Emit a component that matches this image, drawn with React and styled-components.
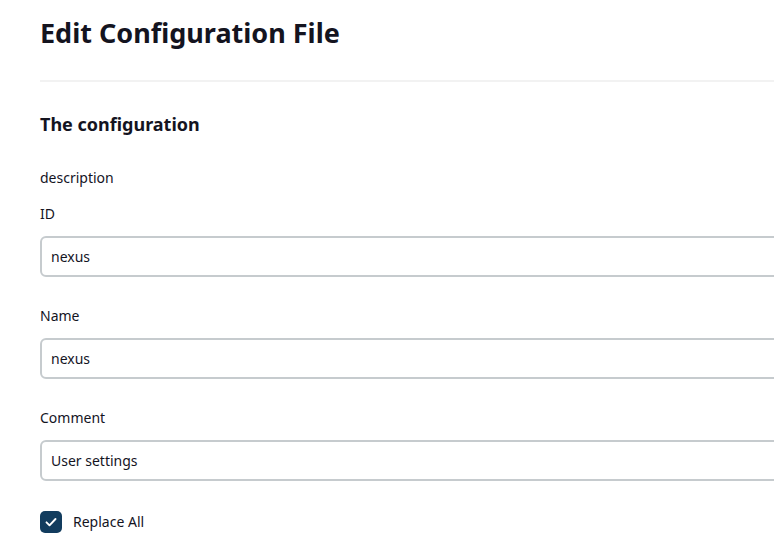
import styled, { createGlobalStyle } from "styled-components";

const GlobalStyle = createGlobalStyle`
  html, body {
    margin: 0;
    padding: 0;
    overflow: hidden;
    background: #ffffff;
  }
  body {
    font-family: "Noto Sans", "Open Sans", sans-serif;
    color: #14141f;
  }
`;

const Page = styled.div`
  width: 820px;
  padding: 14px 0 0 40px;
  box-sizing: border-box;
`;

const Title = styled.h1`
  margin: 0;
  font-size: 27px;
  font-weight: 700;
  line-height: 38px;
`;

const Separator = styled.hr`
  margin: 28px 0 0;
  border: none;
  height: 2px;
  background-color: #f2f2f2;
`;

const SectionTitle = styled.h2`
  margin: 29px 0 0;
  font-size: 18px;
  font-weight: 700;
  line-height: 26px;
`;

const Description = styled.div`
  margin-top: 31px;
  font-size: 14px;
  line-height: 20px;
`;

const FormItem = styled.div`
  margin-top: ${(props) => props.gap || 29}px;
`;

const Label = styled.label`
  display: block;
  font-size: 14px;
  line-height: 20px;
  margin-bottom: 12px;
`;

const Input = styled.input`
  display: block;
  width: 100%;
  height: 41px;
  box-sizing: border-box;
  padding: 0 9px;
  border: 2px solid #c6cbce;
  border-radius: 6px;
  font-family: inherit;
  font-size: 14px;
  color: #14141f;
  background: #fff;
  outline: none;
`;

const CheckRow = styled.label`
  display: flex;
  align-items: center;
  gap: 11px;
  margin-top: 30px;
  font-size: 14px;
  line-height: 22px;
`;

const Box = styled.span`
  display: flex;
  align-items: center;
  justify-content: center;
  width: 22px;
  height: 22px;
  border-radius: 5px;
  background-color: #123c5e;
`;

const fields = [
  { label: "ID", value: "nexus", gap: 16 },
  { label: "Name", value: "nexus" },
  { label: "Comment", value: "User settings" },
];

const App = () => {
  return (
    <>
      <GlobalStyle />
      <Page>
        <Title>Edit Configuration File</Title>
        <Separator />
        <SectionTitle>The configuration</SectionTitle>
        <Description>description</Description>
        {fields.map((field) => (
          <FormItem key={field.label} gap={field.gap}>
            <Label>{field.label}</Label>
            <Input defaultValue={field.value} />
          </FormItem>
        ))}
        <CheckRow>
          <Box>
            <svg width="14" height="14" viewBox="0 0 14 14" fill="none">
              <path
                d="M2.5 7.3l3 3L11.5 4"
                stroke="#fff"
                strokeWidth="1.9"
                strokeLinecap="round"
                strokeLinejoin="round"
              />
            </svg>
          </Box>
          Replace All
        </CheckRow>
      </Page>
    </>
  );
};

export default App;
